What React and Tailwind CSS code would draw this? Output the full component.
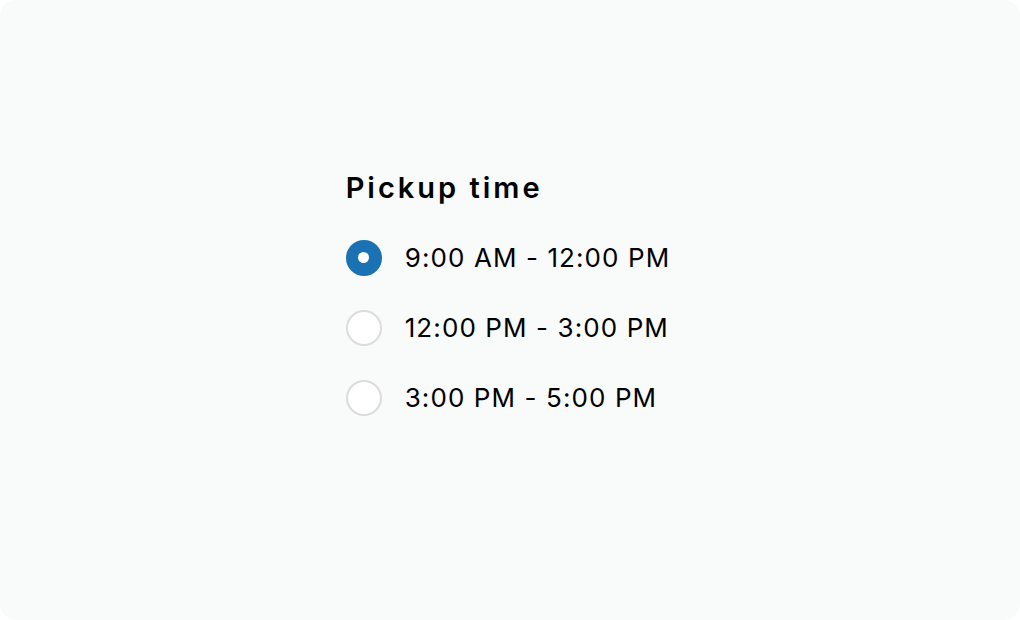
import React, { useState } from 'react';

const slots = ['9:00 AM - 12:00 PM', '12:00 PM - 3:00 PM', '3:00 PM - 5:00 PM'];

export default function App() {
    const [picked, setPicked] = useState(0);

    return (
        <div className="h-[620px] w-[1020px] bg-white" style={{ fontFamily: 'Inter, "Noto Sans", sans-serif' }}>
            <div className="flex h-full w-full items-center justify-center rounded-2xl bg-[#f9fafa] pb-[35px] pr-[4px]">
                <div className="flex flex-col">
                    <h2 className="text-[29px] font-semibold leading-9 tracking-[3px] text-black">Pickup time</h2>
                    <div className="mt-[34px] flex flex-col gap-[34px]">
                        {slots.map((slot, i) => (
                            <label key={slot} className="flex cursor-pointer items-center gap-[23px]" onClick={() => setPicked(i)}>
                                {picked === i ? (
                                    <span className="flex h-9 w-9 items-center justify-center rounded-full bg-[#1a72b3]">
                                        <span className="h-[11px] w-[11px] rounded-full bg-white"></span>
                                    </span>
                                ) : (
                                    <span className="h-9 w-9 rounded-full border-2 border-[#dcdcdc] bg-white"></span>
                                )}
                                <span className="text-[26px] leading-9 tracking-[1.1px] text-black">{slot}</span>
                            </label>
                        ))}
                    </div>
                </div>
            </div>
        </div>
    );
}
